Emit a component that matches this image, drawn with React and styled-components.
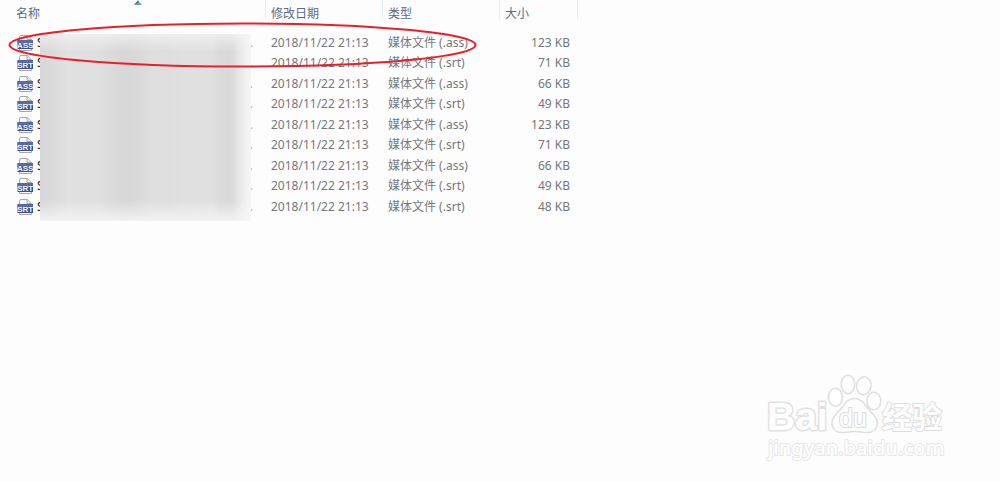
import React from "react";
import styled, { createGlobalStyle } from "styled-components";

const GlobalStyle = createGlobalStyle`
  *, *::before, *::after { box-sizing: border-box; }
  body {
    margin: 0;
    background: #fdfdfd;
    font-family: "Noto Sans", "Noto Sans CJK SC", sans-serif;
    font-size: 12px;
    color: #75787c;
  }
`;

const Page = styled.main`
  position: relative;
  min-height: 100vh;
  overflow: hidden;
`;

const FileTable = styled.table`
  width: 100%;
  table-layout: fixed;
  border-collapse: separate;
  border-spacing: 0;
`;

const Column = styled.col`
  width: ${(p) => p.$width || "auto"};
`;

const HeadCell = styled.th`
  position: relative;
  height: 28px;
  padding: 0 0 0 ${(p) => (p.$first ? "16px" : "5px")};
  font-weight: 400;
  line-height: 16px;
  text-align: left;
  vertical-align: middle;
  color: #5b6b85;
  background: ${(p) =>
    p.$last
      ? "none"
      : "linear-gradient(#e3edf7, #e3edf7 80%, transparent) right top / 1px 21px no-repeat"};
`;

const SortMark = styled.svg`
  position: absolute;
  top: 0;
  left: 134px;
`;

const Rows = styled.tbody`
  &::before {
    content: "";
    display: table-row;
    height: 5px;
  }
`;

const Row = styled.tr`
  height: 20px;
  &:nth-child(even) { height: 21px; }
`;

const Cell = styled.td`
  padding: 0 ${(p) => (p.$numeric ? "8px" : "0")} 0 5px;
  line-height: 20px;
  white-space: nowrap;
  vertical-align: top;
  text-align: ${(p) => (p.$numeric ? "right" : "left")};
`;

const NameCell = styled(Cell)`
  padding: 0 13px 0 17px;
`;

const FileName = styled.div`
  display: flex;
  align-items: center;
  gap: 3px;
  height: 20px;
  color: #1d1a2c;
`;

const NameEnd = styled.span`
  margin-left: auto;
  color: #8cc3dc;
`;

const Cover = styled.div`
  position: absolute;
  top: 34px;
  left: 40px;
  width: 211px;
  height: 187px;
  background:
    linear-gradient(to right, transparent 92%, rgba(248, 248, 248, 0.8)),
    linear-gradient(to bottom, rgba(245, 245, 245, 0.7), transparent 9%, transparent 89%, rgba(248, 248, 248, 0.8)),
    linear-gradient(to right,
      #d8d8d8 0, #dadada 12px, #dedede 20px, #e1e1e1 28px, #e0e0e0 58px,
      #dadada 72px, #d7d7d7 84px, #d9d9d9 96px, #dcdcdc 107px, #dfdfdf 109px,
      #dedede 126px, #e1e1e1 150px, #e0e0e0 172px, #dadada 180px,
      #d9d9d9 190px, #e0e0e0 198px, #ececec 211px);
`;

const Ring = styled.svg`
  position: absolute;
  top: 20px;
  left: 6px;
`;

const Watermark = styled.svg`
  position: absolute;
  right: 40px;
  bottom: 12px;
`;

const files = [
  ["ass", "123 KB"],
  ["srt", "71 KB"],
  ["ass", "66 KB"],
  ["srt", "49 KB"],
  ["ass", "123 KB"],
  ["srt", "71 KB"],
  ["ass", "66 KB"],
  ["srt", "49 KB"],
  ["srt", "48 KB"],
];

function FileIcon({ type }) {
  return (
    <svg width="17" height="16" viewBox="0 0 17 16" aria-hidden="true">
      <path d="M2.5 15.5V2Q2.5 .5 4 .5H10.5L14.5 4.5V15.5Z" fill="#fafafa" stroke="#a8a8a8" />
      <path d="M10 .5V4.5H14.5" fill="#ededed" stroke="#a8a8a8" />
      <rect x="0.5" y="5" width="15.5" height="9" rx="0.6" fill="#3c5190" />
      <rect x="0.5" y="5" width="15.5" height="4" rx="0.6" fill="#566ba6" />
      <text
        x="8.2"
        y="12.6"
        fontFamily="Liberation Sans Narrow, Liberation Sans, sans-serif"
        fontSize="8"
        fontWeight="700"
        textAnchor="middle"
        fill="#f3f6ff"
      >
        {type.toUpperCase()}
      </text>
    </svg>
  );
}

function BaiduMark() {
  return (
    <Watermark width="210" height="105" viewBox="0 0 210 105" role="img" aria-label="Baidu">
      <g fill="#fefefe" stroke="#e0e0e0" strokeWidth="1.6">
        <ellipse cx="85.5" cy="32.3" rx="7" ry="9" />
        <ellipse cx="98" cy="19.5" rx="6.8" ry="9.2" />
        <ellipse cx="113.8" cy="20.8" rx="7.2" ry="9" transform="rotate(10 113.8 20.8)" />
        <ellipse cx="123.8" cy="36" rx="7" ry="8.8" />
        <path d="M104.5 33.5C111 33.5 114 38 117 42.5C120 47 127.5 51 127.5 58C127.5 64 123 67.5 117 67.5C112 67.5 109 66.5 104.5 66.5C100 66.5 97 67.5 92 67.5C86 67.5 82 64 82 58C82 51 89 47 92 42.5C95 38 98 33.5 104.5 33.5Z" />
      </g>
      <g fill="#fefefe" stroke="#e2e2e2" strokeWidth="3" strokeLinejoin="round" paintOrder="stroke">
        <text x="17" y="65" fontFamily="Liberation Sans, sans-serif" fontSize="39" fontWeight="700">Bai</text>
        <text x="89" y="62" fontFamily="Liberation Sans, sans-serif" fontSize="25" fontWeight="400" stroke="#dadada" strokeWidth="2">du</text>
        <text x="132" y="63" fontFamily="Noto Sans CJK SC, sans-serif" fontSize="30" fontWeight="700" stroke="#dedede" strokeWidth="2">经验</text>
        <text x="18" y="90" fontFamily="Noto Sans, sans-serif" fontSize="20" fontWeight="500" stroke="#e8e8e8" strokeWidth="2">jingyan.baidu.com</text>
      </g>
    </Watermark>
  );
}

export default function App() {
  return (
    <Page>
      <GlobalStyle />
      <FileTable>
        <colgroup>
          <Column $width="266px" />
          <Column $width="117px" />
          <Column $width="117px" />
          <Column $width="78px" />
          <Column />
        </colgroup>
        <thead>
          <tr>
            <HeadCell $first>
              名称
              <SortMark width="8" height="5" viewBox="0 0 8 5" aria-hidden="true">
                <path d="M0 5L4 .5L8 5Z" fill="#6fa3bf" />
                <path d="M0 5L4 .5L5 2Z" fill="#3b6c8c" />
              </SortMark>
            </HeadCell>
            <HeadCell>修改日期</HeadCell>
            <HeadCell>类型</HeadCell>
            <HeadCell>大小</HeadCell>
            <HeadCell $last as="td" />
          </tr>
        </thead>
        <Rows>
          {files.map(([type, size], i) => (
            <Row key={i}>
              <NameCell>
                <FileName>
                  <FileIcon type={type} />
                  <span>S</span>
                  <NameEnd>.</NameEnd>
                </FileName>
              </NameCell>
              <Cell>2018/11/22 21:13</Cell>
              <Cell>媒体文件 (.{type})</Cell>
              <Cell $numeric>{size}</Cell>
              <Cell />
            </Row>
          ))}
        </Rows>
      </FileTable>
      <Cover />
      <Ring width="474" height="50" viewBox="0 0 474 50" aria-hidden="true">
        <ellipse cx="236.5" cy="25" rx="233" ry="21.5" fill="none" stroke="#ea2028" strokeWidth="2" />
      </Ring>
      <BaiduMark />
    </Page>
  );
}
